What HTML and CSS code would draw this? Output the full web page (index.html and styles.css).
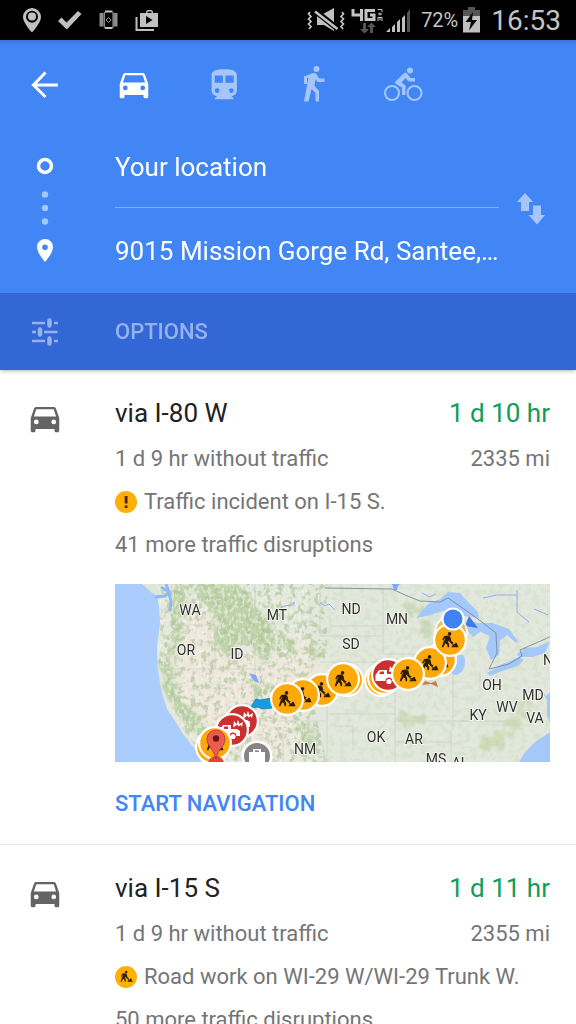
FILE: index.html
```html
<!DOCTYPE html>
<html lang="en">
<head>
<meta charset="utf-8">
<meta name="viewport" content="width=device-width, initial-scale=1">
<title>Directions</title>
<link rel="stylesheet" href="styles.css">
</head>
<body>
<svg class="defs" aria-hidden="true">
  <symbol id="car" viewBox="0 0 24 24">
    <path fill-rule="evenodd" d="M18.92 6.01C18.72 5.42 18.16 5 17.5 5h-11c-.66 0-1.21.42-1.42 1.01L3 12v8c0 .55.45 1 1 1h1c.55 0 1-.45 1-1v-1h12v1c0 .55.45 1 1 1h1c.55 0 1-.45 1-1v-8l-2.08-5.99zM6.500 16a1.500 1.500 0 1 1 0-3 1.500 1.500 0 0 1 0 3zm11 0a1.500 1.500 0 1 1 0-3 1.500 1.500 0 0 1 0 3zM5 11l1.500-4.500h11L19 11H5z"/>
  </symbol>
  <symbol id="worker" viewBox="0 0 20 20">
    <circle cx="9.500" cy="3.200" r="2"/>
    <path d="M3.500 5.500 8 5l2.500 1.500 1 4.500 2.500 2-1 1-3-2-.8-2-1.700 2 1.500 2.500V18H7.400l-.6-3-2-1.500L2.600 18H.8l2-6 2-4-1 .2-1 2.300-1.500-.6z"/>
    <path d="m7 8 7 7-.8.8-7-7zM11.500 18l2-3 1.500-.4L16 13l1.500.3L19.500 18z"/>
  </symbol>
  <symbol id="work-pin" viewBox="0 0 34 34">
    <circle cx="17" cy="17" r="17" fill="#fff"/>
    <circle cx="17" cy="17" r="14.800" fill="#fea90a"/>
    <use href="#worker" x="8" y="8" width="18" height="18" fill="#2b1c05"/>
  </symbol>
  <symbol id="crash-pin" viewBox="0 0 34 34">
    <circle cx="17" cy="17" r="17" fill="#fff"/>
    <circle cx="17" cy="17" r="14.800" fill="#c9302f"/>
    <path fill="#fff" fill-rule="evenodd" d="M4.500 17 8 12h8v4h6l3 2v5h-3.500a3.500 3.500 0 0 0-7 0H4.500zM8 16h5v-2.500H9.500z"/>
    <circle cx="18" cy="23.500" r="2.600" fill="#fff"/>
    <path fill="#fff" d="m18 14 1-6 2.500 3L23 7l1.500 4L28 9l-1 5-1.500-2-2 1.500-1.500-2-2 2z"/>
  </symbol>
</svg>

<div class="screen">
  <div class="status">
    <svg width="160" height="40" viewBox="0 0 160 40" aria-hidden="true">
      <path fill-rule="evenodd" d="M32 8a9 9 0 0 0-9 9c0 6 9 15.500 9 15.500S41 23 41 17a9 9 0 0 0-9-9zm0 2.800a6 6 0 1 1 0 12 6 6 0 0 1 0-12z"/>
      <circle cx="32" cy="16.500" r="4"/>
      <path d="m58 21 3.500-3.500 5 5 11.500-11.500 3.500 3L66.800 29.500z"/>
      <path fill="#8c8c8c" d="M99.500 13h4v13.500h-4zM113.500 13h4v13.500h-4z"/>
      <path d="M105 11.500h7.500M105 28h7.500" fill="none" stroke="#c4c4c4" stroke-width="1.800"/>
      <path d="M104.300 12v16M113 12v16" fill="none" stroke="#aaa"/>
      <path d="m108.600 17.500 2.500 2.500-2.500 2.500-2.500-2.500z" fill="none" stroke="#aaa"/>
      <path fill-rule="evenodd" d="M140 13h6v-1.500l1.500-1.500h4l1.500 1.500V13h5v14h-18zm7.500 0h4v-1.500h-4zM146 16v8l6.500-4z"/>
      <path d="M135.500 17h2v12H154v2h-18.500z"/>
    </svg>
    <div class="status-right">
      <svg width="110" height="40" viewBox="0 0 110 40" aria-hidden="true">
        <path d="m3 12-1.500 2L4 16.500 1.500 19 4 21.500 1.500 24 4 26.500 2 29M35 12l1.500 2-2.500 2.500 2.500 2.500-2.500 2.500 2.500 2.500-2.500 2.500 2 2.500" fill="none" stroke="#c4c4c4" stroke-width="1.700"/>
        <path d="M10 14h6l11-6v23l-10-6h-7z"/>
        <path d="m7 10 24 19" stroke="#000" stroke-width="6"/>
        <path d="m8 11.500 22.500 17.500" stroke="#c4c4c4" stroke-width="2.600"/>
        <path d="M46 9v6h8M54.500 9v12M68 10.500h-9v9h8V15h-4" fill="none" stroke="#c4c4c4" stroke-width="3"/>
        <path d="M70.500 9.500h4.500V12M71 14h4M73 12.500v3M71 17v4M71 17.500h4V21M73 17.500v3" fill="none" stroke="#c4c4c4"/>
        <path fill="#555" d="M56 23h3v6h3l-4.500 4.500L53 29h3zM63 33h3v-6h3l-4.500-4.500L60 27h3z"/>
        <path d="m79 32 4-4v4zM85 27l3-3v8h-3zM90 22l3-3v13h-3zM95 18l3-3v17h-3z"/>
        <path fill="#555" d="m100 13 3-4v23h-3z"/>
      </svg>
      <span class="percent">72%</span>
      <svg width="17" height="40" viewBox="0 0 17 40" aria-hidden="true">
        <path fill="#555" d="M5 7h7v3h5v8H0v-8h5z"/>
        <path d="M0 16h17v16.500H0z"/>
        <path fill="#000" d="m10 12-7.500 10H8l-2 8.500L14 20H9z"/>
      </svg>
      <span class="clock">16:53</span>
    </div>
  </div>

  <header class="header">
    <nav class="modes" aria-label="Travel mode">
      <button class="mode on" aria-label="Back">
        <svg width="40" height="40" viewBox="0 0 40 40"><path d="M33 20H9M20.500 7.500 8.500 20l12 12" fill="none" stroke="#fff" stroke-width="3"/></svg>
      </button>
      <button class="mode on" aria-label="Driving"><svg width="38" height="38" viewBox="0 0 38 38"><use href="#car" x="-1" y="-1" width="38" height="38"/></svg></button>
      <button class="mode" aria-label="Transit">
        <svg width="38" height="38" viewBox="0 0 24 24"><path fill-rule="evenodd" d="M11.500 2c-4.420 0-8 .5-8 4v9.500C3.500 17.430 5.070 19 7 19l-1.500 1.500v.5h12v-.5L16 19c1.930 0 3.500-1.570 3.500-3.500V6c0-3.500-3.580-4-8-4zM7 17a1.500 1.500 0 1 1 0-3 1.500 1.500 0 0 1 0 3zm3.700-6.500H5.500V6h5.200zM16 17a1.500 1.500 0 1 1 0-3 1.500 1.500 0 0 1 0 3zm1.500-6.500h-5.200V6h5.200z"/></svg>
      </button>
      <button class="mode" aria-label="Walking">
        <svg width="40" height="40" viewBox="0 0 40 40"><circle cx="21.500" cy="4" r="3"/><path d="M9 11.500 18 8q3-.5 4 2l2 3.500h5.500V17h-7L20.500 14l-1 7 4.500 5V36.500h-3.500V28l-4-4-3 12.500H9L13.500 12.500 12 13.500V19H9z"/></svg>
      </button>
      <button class="mode" aria-label="Cycling">
        <svg width="42" height="40" viewBox="1 0 42 40"><circle cx="9" cy="28" r="7" fill="none" stroke="#a6c6fb" stroke-width="2"/><circle cx="31.500" cy="28" r="7" fill="none" stroke="#a6c6fb" stroke-width="2"/><circle cx="27" cy="5.500" r="3"/><path d="m12 17 9-9q2-1 3.500 1l3 4H32v3.500h-6.500L22.500 13l-4 4.500 4 3V30H19v-7.500L13 19q-1.500-1-1-2z"/></svg>
      </button>
    </nav>

    <div class="fields">
      <svg width="90" height="120" viewBox="0 0 90 120" aria-hidden="true">
        <circle cx="45" cy="16" r="6.500" fill="none" stroke="#fff" stroke-width="3.500"/>
        <g fill="#a6c6fb"><circle cx="45" cy="44.500" r="3.200"/><circle cx="45" cy="58" r="3.200"/><circle cx="45" cy="71.500" r="3.200"/></g>
        <path fill="#fff" fill-rule="evenodd" d="M45 89a8 8 0 0 0-8 8c0 6 8 15 8 15s8-9 8-15a8 8 0 0 0-8-8zm0 5.500a2.800 2.800 0 1 1 0 5.600 2.800 2.800 0 0 1 0-5.600z"/>
      </svg>
      <div class="inputs">
        <input class="from" type="text" aria-label="Starting point" value="Your location">
        <input class="to" type="text" aria-label="Destination" value="9015 Mission Gorge Rd, Santee,…">
      </div>
      <button class="swap" aria-label="Swap start and destination">
        <svg width="30" height="34" viewBox="0 1 30 34"><path d="M9 1 1 10h4v9h8v-9h4zM17 13.500h8V23h4l-8 9.500L12.500 23H17z"/></svg>
      </button>
    </div>

    <button class="options">
      <svg width="90" height="30" viewBox="0 0 90 30" aria-hidden="true">
        <path d="M32 6h13M54 6h4M32 15h4M44 15h13.500M32 24h13M54 24h4" stroke="#94b2ee" stroke-width="2.400"/>
        <path d="M49.500 3.500v5M40 12.500v5M49.500 21.500v5" stroke="#94b2ee" stroke-width="4.500" stroke-linecap="round"/>
      </svg>
      <span>OPTIONS</span>
    </button>
  </header>

  <main class="routes">
    <article class="route">
      <svg class="route-icon" width="38" height="38" aria-hidden="true"><use href="#car"/></svg>
      <div class="route-body">
        <div class="row title"><span>via I-80 W</span><span class="time">1 d 10 hr</span></div>
        <div class="row"><span>1 d 9 hr without traffic</span><span>2335 mi</span></div>
        <div class="row note">
          <svg width="22" height="22" viewBox="0 0 22 22" aria-hidden="true"><circle cx="11" cy="11" r="11" fill="#feb005"/><path fill="#4a2405" d="M9.700 5h2.800v7.500H9.700zM9.700 14.500h2.800V17H9.700z"/></svg>
          <span>Traffic incident on I-15 S.</span>
        </div>
        <div class="row">41 more traffic disruptions</div>
        <svg class="map" viewBox="0 0 435 178" role="img" aria-label="Route map">
          <defs>
            <filter id="rough" x="-10%" y="-10%" width="120%" height="120%" color-interpolation-filters="sRGB">
              <feTurbulence type="fractalNoise" baseFrequency="0.120" numOctaves="3" seed="4"/>
              <feDisplacementMap in="SourceGraphic" scale="22" result="d"/>
              <feGaussianBlur in="d" stdDeviation="1"/>
            </filter>
            <filter id="grain" x="0" y="0" width="100%" height="100%" color-interpolation-filters="sRGB">
              <feTurbulence type="fractalNoise" baseFrequency="0.160" numOctaves="4" seed="9"/>
              <feColorMatrix values="0 0 0 0 .66  0 0 0 0 .76  0 0 0 0 .58  0 6 0 0 -2.900"/>
              <feComposite in2="SourceGraphic" operator="in"/>
            </filter>
            <filter id="ridge" x="0" y="0" width="100%" height="100%" color-interpolation-filters="sRGB">
              <feTurbulence type="fractalNoise" baseFrequency="0.300 0.200" numOctaves="2" seed="3"/>
              <feColorMatrix values="0 0 0 0 .97  0 0 0 0 .95  0 0 0 0 .92  0 0 6 0 -3"/>
              <feComposite in2="SourceGraphic" operator="in"/>
            </filter>
            <filter id="soft"><feGaussianBlur stdDeviation="9"/></filter>
          </defs>
          <rect width="435" height="178" fill="#e3e8dc"/>
          <path filter="url(#soft)" fill="#efe7dc" d="M60 30 100 20l30 60 60-30 20 40-40 60 10 28H95L60 120z"/>
          <g filter="url(#rough)" fill="#bfd4ab">
            <path d="M57 0h15l-4 30-4 42-10 3zM78 0h50l10 22 15 12 10 30-15 14-14-22-22 16-16-12 5-28-20-20z"/>
            <path d="M45 78h12l3 32 22 20 12 22-6 4-22-20-16-26z"/>
            <path d="m165 48 12 8 6 14-4 3-12-14zM193 66h12v10h-12zM138 104l26-4 4 8-28 6zM182 140h16l-2 22h-12z"/>
            <path d="M285 18l20 2 10 8-20 4zM305 38l16 4-6 14-10-4z" opacity=".7"/>
          </g>
          <path filter="url(#rough)" fill="#ccd9b3" d="m360 158 26-12 18-20 8-12 3 8-12 20-20 20-18 4zM282 134l24-6 10 8-26 8z" opacity=".8"/>
          <path filter="url(#grain)" opacity=".6" d="M44 0h168v72l-20 20 20 86H92L60 135 44 80z"/>
          <path filter="url(#ridge)" opacity=".55" d="M44 0h150v72l-10 20 14 86H92L60 135 44 80z"/>
          <path filter="url(#grain)" opacity=".15" d="M212 0h223v178H212z"/>
          <path fill="none" stroke="#c9cfc5" stroke-width=".7" d="M62 41h38M48 85h102M140 0v120h72v58M100 41v44M205 0v52h62M205 78h56M212 130h68M220 142h18v24M280 86v92M280 158h56M280 137h72M338 86v60M336 145v33M268 70h38M268 5v65M217 42h52M168 145v33M135 137h75M365 88v18M345 137h60"/>
          <g fill="#a5c8fb">
            <path fill="#abcdfd" d="M0 0h30l12 12 2 10 1 18-3 22v18l4 25 6 20 10 15 6 10 12 15 6 13H0z"/>
            <path fill="#dfe6d8" d="m27 0 10 9 8 4 2-3-7-10z"/>
            <path fill="none" stroke="#8fb8f7" stroke-width="3" d="m40 13 10-1 4-4-3-8M54 9l2 9-1 9M46 3l6 4"/>
            <path d="m301 34 12-14 12-5 8-7 12 1 8 9 10 10 1 6-14-2-12 2-10-7-12 4zM341 73q9-6 9 4t-8 14q-8 0-5-7zM345 38l16 0 7 8-10 7-5-6-8 1zM362 39l16 0 16 6 9 12-2 2-9-8-7 6-1 14-8 5-5-12 4-12-9-4zM372 89l13-8 19-8 5 3-6 6-16 5-12 5zM402 70l8-6 12-1 13-6-5 12-12 4-14 0zM435 148l-15 10-10 10-6 10h31zM427 108l5 8 0 16 3 8v-32l-4 4z"/>
            <path fill="#7fa8f5" d="m134 89 7 2 3 8-5-2zM277 0h8l-2 2-1 4h-3z"/>
          </g>
          <path fill="none" stroke="#8eaef1" d="M180 18l-3 3-8 1-4 3M205 18l5 4 4-2 6 6M368 14l14-3 20 0M402 6v22l12 10M307 9l8 4 6-3M419 25l14 6"/>
          <path fill="none" stroke="#718091" stroke-width=".8" d="m210 4 67 1 13 6 15 6 20 1 8-4 16 11 14 10 18 14 1 20-8 16 20-5 13-8-2-6 32-14"/>
          <g class="labels">
            <text x="75" y="31">WA</text><text x="162" y="36">MT</text><text x="71" y="71">OR</text><text x="122" y="75">ID</text><text x="190" y="170">NM</text><text x="236" y="30">ND</text><text x="282" y="40">MN</text><text x="236" y="65">SD</text><text x="377" y="106">OH</text><text x="418" y="116">MD</text><text x="392" y="128">WV</text><text x="363" y="136">KY</text><text x="420" y="139">VA</text><text x="261" y="158">OK</text><text x="299" y="160">AR</text><text x="321" y="180">MS</text><text x="345" y="184">AL</text><text x="433" y="81">N</text>
          </g>
          <path fill="#159ce4" stroke="#1879ac" stroke-width=".8" d="m135 124 6-9 4 1 12-2v10l-10 1-4-2z"/>
          <path fill="#c87c4e" d="m307 101 3-4 6 2 5-2 2 6-7-3z"/>
          <path fill="#3c7ce6" d="m354 32 9 12-13-2z"/>
          <circle cx="142" cy="172" r="15.500" fill="#fff"/><circle cx="142" cy="172" r="13" fill="#858585"/>
          <path fill="#fff" fill-rule="evenodd" d="M134 168h4v-3h8v3h4v10h-16zm6 0h4v-1.500h-4z"/>
          <use href="#work-pin" x="190" y="89" width="34" height="34"/>
          <use href="#work-pin" x="171" y="94" width="34" height="34"/>
          <use href="#work-pin" x="155" y="98" width="34" height="34"/>
          <use href="#work-pin" x="215" y="79" width="34" height="34"/>
          <use href="#work-pin" x="211" y="78" width="34" height="34"/>
          <use href="#work-pin" x="249" y="79" width="34" height="34"/>
          <use href="#work-pin" x="252" y="77" width="34" height="34"/>
          <use href="#crash-pin" x="256" y="74" width="34" height="34"/>
          <use href="#work-pin" x="308" y="59" width="34" height="34"/>
          <use href="#work-pin" x="298" y="62" width="34" height="34"/>
          <use href="#work-pin" x="276" y="73" width="34" height="34"/>
          <use href="#work-pin" x="319" y="31" width="34" height="34" opacity=".7"/>
          <use href="#work-pin" x="318" y="39" width="34" height="34"/>
          <circle cx="338" cy="35" r="11.500" fill="#fff"/><circle cx="338" cy="35" r="9.500" fill="#3f82f5"/>
          <use href="#crash-pin" x="110" y="120" width="34" height="34"/>
          <use href="#crash-pin" x="100" y="129" width="34" height="34"/>
          <use href="#work-pin" x="80" y="146" width="34" height="34"/>
          <use href="#work-pin" x="83" y="142" width="34" height="34"/>
          <circle cx="101" cy="180" r="8" fill="#e0443a"/>
          <path fill="#eb5b51" stroke="#b5352d" stroke-width=".8" d="M101 146a9 9 0 0 0-9 9c0 7 7 10 9 20 2-10 9-13 9-20a9 9 0 0 0-9-9z"/>
          <circle cx="101" cy="154.500" r="3.200" fill="#6c1611"/>
        </svg>
        <button class="start">START NAVIGATION</button>
      </div>
    </article>

    <article class="route">
      <svg class="route-icon" width="38" height="38" aria-hidden="true"><use href="#car"/></svg>
      <div class="route-body">
        <div class="row title"><span>via I-15 S</span><span class="time">1 d 11 hr</span></div>
        <div class="row"><span>1 d 9 hr without traffic</span><span>2355 mi</span></div>
        <div class="row note">
          <svg width="22" height="22" viewBox="0 0 22 22" aria-hidden="true"><circle cx="11" cy="11" r="11" fill="#feb005"/><use href="#worker" x="5" y="4" width="13" height="13" fill="#3a2405"/></svg>
          <span>Road work on WI-29 W/WI-29 Trunk W.</span>
        </div>
        <div class="row">50 more traffic disruptions</div>
      </div>
    </article>
  </main>
</div>
</body>
</html>
```
FILE: styles.css
```css
* {
  box-sizing: border-box;
}

body {
  margin: 0;
  background: #fff;
  color: #757575;
  font-family: Roboto, "Liberation Sans", sans-serif;
}

button,
input {
  margin: 0;
  padding: 0;
  border: 0;
  background: none;
  color: inherit;
  font: inherit;
}

svg {
  display: block;
  flex: none;
}

.defs {
  position: absolute;
  width: 0;
  height: 0;
}

.screen {
  display: flex;
  flex-direction: column;
  height: 100vh;
  overflow: hidden;
}

/* Status bar */
.status {
  display: flex;
  flex: none;
  justify-content: space-between;
  height: 40px;
  padding-right: 15px;
  background: #000;
  color: #c4c4c4;
  fill: #c0c0c0;
}

.status-right {
  display: flex;
  align-items: center;
}

.percent {
  margin: 0 5px 0 4px;
  font-size: 20px;
}

.clock {
  margin-left: 11px;
  font-size: 28px;
}

/* Header */
.header {
  position: relative;
  flex: none;
  background: #4285f4;
  box-shadow: 0 1px 4px rgba(0, 0, 0, .3);
  color: #fff;
}

.modes {
  display: flex;
  padding-top: 3px;
  background: linear-gradient(#3b76d8, #4285f4 6px);
}

.mode {
  display: flex;
  align-items: center;
  justify-content: center;
  width: 90px;
  height: 84px;
  fill: #a6c6fb;
}

.mode.on {
  fill: #fff;
}

.fields {
  display: grid;
  grid-template-columns: 90px 1fr 64px;
  align-items: center;
  padding-right: 13px;
}

.inputs {
  display: flex;
  flex-direction: column;
  min-width: 0;
  padding-left: 25px;
}

.from,
.to {
  width: 100%;
  font-size: 26px;
  text-overflow: ellipsis;
}

.from {
  height: 81px;
  border-bottom: 1px solid #7fadf8;
}

.to {
  height: 85px;
}

.swap {
  display: flex;
  justify-content: center;
  fill: #a6c6fb;
}

.options {
  display: flex;
  align-items: center;
  gap: 25px;
  width: 100%;
  height: 77px;
  background: #3367d6;
  color: #94b2ee;
  font-size: 22px;
  font-weight: 500;
}

/* Routes */
.routes {
  flex: 1;
  min-height: 0;
  overflow-y: auto;
  scrollbar-width: none;
}

.route {
  display: grid;
  grid-template-columns: 90px 1fr;
  padding: 20px 26px 0 0;
  border-bottom: 1px solid #e2e2e2;
}

.route-icon {
  justify-self: center;
  margin-top: 9px;
  fill: #646464;
}

.route-body {
  min-width: 0;
  padding-left: 25px;
}

.row {
  display: flex;
  justify-content: space-between;
  font-size: 22px;
  line-height: 43px;
  white-space: nowrap;
}

.title {
  color: #212121;
  font-size: 26px;
  line-height: 47px;
}

.time {
  color: #0f9d58;
}

.note {
  align-items: center;
  justify-content: flex-start;
  gap: 7px;
}

.map {
  width: 100%;
  margin-top: 18px;
}

.labels {
  fill: #303030;
  stroke: #f4f5ee;
  stroke-width: 2px;
  paint-order: stroke;
  font-size: 14px;
  text-anchor: middle;
}

.start {
  height: 82px;
  color: #4285f4;
  font-size: 22px;
  font-weight: 500;
}
```
